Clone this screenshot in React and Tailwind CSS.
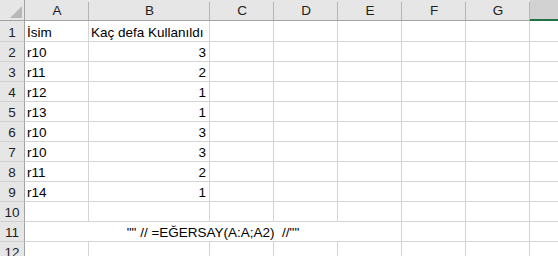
import React from "react";

const cols = ["A", "B", "C", "D", "E", "F", "G"];
const widths = ["w-[64px]", "w-[121px]", "w-[64px]", "w-[64px]", "w-[64px]", "w-[64px]", "w-[64px]"];

const data = [
  ["İsim", "Kaç defa Kullanıldı"],
  ["r10", "3"],
  ["r11", "2"],
  ["r12", "1"],
  ["r13", "1"],
  ["r10", "3"],
  ["r10", "3"],
  ["r11", "2"],
  ["r14", "1"],
  ["", ""],
];

function RowNum({ n, h }) {
  return (
    <div className={`w-[25px] shrink-0 ${h} bg-[#e6e6e6] border-r border-b border-r-[#a3a3a3] border-b-[#d0d0d0] flex items-end justify-center pb-[2px] text-[#222]`}>
      {n}
    </div>
  );
}

function Cell({ w, h, children, right, last }) {
  return (
    <div
      className={`${w} shrink-0 ${h} border-b border-[#d4d4d4] ${last ? "" : "border-r"} flex items-end pb-[2px] ${right ? "justify-end pr-[3px]" : "pl-[2px]"} overflow-visible whitespace-nowrap text-black`}
    >
      {children}
    </div>
  );
}

export default function App() {
  return (
    <div
      className="w-[558px] h-[256px] overflow-hidden bg-white text-[13.5px] leading-none"
      style={{ fontFamily: '"Liberation Sans", Arial, sans-serif' }}
    >
      {/* header */}
      <div className="flex h-[21px]">
        <div className="w-[25px] shrink-0 h-[21px] bg-[#e6e6e6] border-r border-b border-[#a3a3a3] relative">
          <svg className="absolute left-0 top-0" width="24" height="20" viewBox="0 0 24 20">
            <polygon points="22,6 22,18 10,18" fill="#b8b8b8" />
          </svg>
        </div>
        {cols.map((c, i) => (
          <div
            key={c}
            className={`${widths[i]} shrink-0 h-[21px] bg-[#e6e6e6] border-b border-b-[#a3a3a3] flex items-end justify-center pb-[3px] text-[#222] relative`}
          >
            {c}
            <div className="absolute right-0 top-[2px] bottom-0 w-px bg-[#b5b5b5]" />
          </div>
        ))}
        <div className="flex-1 h-[21px] bg-[#d2d2d2] border-b-2 border-[#217346]" />
      </div>

      {data.map((r, i) => {
        const h = i === 0 ? "h-[21px]" : "h-[20px]";
        return (
          <div key={i} className="flex">
            <RowNum n={i + 1} h={h} />
            <Cell w={widths[0]} h={h}>{r[0]}</Cell>
            <Cell w={widths[1]} h={h} right={i > 0}>{r[1]}</Cell>
            {widths.slice(2).map((w, j) => (
              <Cell key={j} w={w} h={h} />
            ))}
            <div className={`flex-1 ${h} border-b border-[#d4d4d4]`} />
          </div>
        );
      })}

      {/* row 11 merged A:E */}
      <div className="flex">
        <RowNum n={11} h="h-[20px]" />
        <div className="w-[377px] shrink-0 h-[20px] border-b border-r border-[#d4d4d4] flex items-end justify-center pb-[2px] whitespace-pre text-black">
          {'"" // =EĞERSAY(A:A;A2)  //""'}
        </div>
        <Cell w={widths[5]} h="h-[20px]" />
        <Cell w={widths[6]} h="h-[20px]" />
        <div className="flex-1 h-[20px] border-b border-[#d4d4d4]" />
      </div>

      {/* row 12 */}
      <div className="flex">
        <RowNum n={12} h="h-[20px]" />
        {widths.map((w, j) => (
          <Cell key={j} w={w} h="h-[20px]" />
        ))}
        <div className="flex-1 h-[20px] border-b border-[#d4d4d4]" />
      </div>
    </div>
  );
}
